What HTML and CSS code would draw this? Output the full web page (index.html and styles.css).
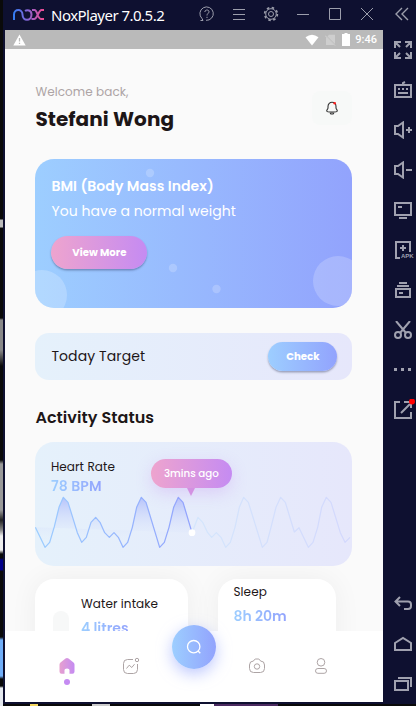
FILE: index.html
```html
<!DOCTYPE html>
<html lang="en">
<head>
<meta charset="utf-8">
<title>NoxPlayer 7.0.5.2</title>
<link rel="stylesheet" href="styles.css">
</head>
<body>
<div class="window">
  <header class="titlebar">
    <svg class="logo" width="32" height="14" viewBox="0 0 32 14" fill="none" stroke="url(#nox)" stroke-width="2">
      <defs><linearGradient id="nox" gradientUnits="userSpaceOnUse" x1="0" y1="0" x2="31" y2="0"><stop offset="0" stop-color="#2f7df5"/><stop offset=".45" stop-color="#8266d8"/><stop offset="1" stop-color="#f04b90"/></linearGradient></defs>
      <path d="M1 12V6.500C1 0.500 9.500 0.500 9.500 6.500C9.500 13.500 18.500 13.500 18.500 6.500C18.500 2 14 1.500 12 3M19 2H21.500C24.500 2 24.500 11 28 11H31M31 2H28.500C25.500 2 24.500 11 21 11H18.500"/>
    </svg>
    <span class="title">NoxPlayer 7.0.5.2</span>
    <div class="controls">
      <svg width="16" height="16" viewBox="0 0 16 16"><path d="M1.500 14.500H4L3 12.500A6.700 6.700 0 1 1 7 14.300M5.800 6C6 3.200 10.300 3.500 10 6C9.800 7.500 8 7.500 8 9.500M8 10.800V12"/></svg>
      <svg width="16" height="16" viewBox="0 0 16 16"><path d="M2 3.500H14M2 8.500H14M2 13.500H14"/></svg>
      <svg width="16" height="16" viewBox="0 0 16 16"><circle cx="8" cy="8" r="5.300"/><circle cx="8" cy="8" r="2.500"/><circle cx="8" cy="8" r="6.400" stroke-width="1.600" stroke-dasharray="2.500 2.520"/></svg>
      <svg width="16" height="16" viewBox="0 0 16 16"><path d="M2 8.500H14"/></svg>
      <svg width="16" height="16" viewBox="0 0 16 16"><path d="M2.500 2.500H13.500V13.500H2.500Z"/></svg>
      <svg width="16" height="16" viewBox="0 0 16 16"><path d="M2 2L14 14M14 2L2 14"/></svg>
      <svg class="collapse" width="16" height="16" viewBox="0 0 16 16"><path d="M8 2L2 8L8 14M14 2L8 8L14 14" stroke-width="1.400"/></svg>
    </div>
  </header>

  <div class="main">
    <section class="app">
      <div class="statusbar">
        <svg width="13" height="12" viewBox="0 0 13 12"><path d="M6.500 0.500L12.700 11.500H0.300Z" fill="#fff"/><path d="M6.500 4V7.500M6.500 8.800V10" stroke="#bababa" stroke-width="1.300"/></svg>
        <div class="signals">
          <svg width="14" height="12" viewBox="0 0 14 12"><path d="M0.500 3.300Q7-2 13.500 3.300L7 11.500Z" fill="#fff"/></svg>
          <svg width="11" height="12" viewBox="0 0 11 12"><path d="M4 0.800H10V11H1V4Z" fill="#cecece"/><path d="M0 1L10.500 11.500" stroke="#bababa" stroke-width="1.500"/><path d="M0 1.500L10 11.500" stroke="#dadada" stroke-width=".8"/></svg>
          <svg width="8" height="13" viewBox="0 0 8 13"><path d="M2.500 0H5.500V1H8V13H0V1H2.500Z" fill="#fff"/></svg>
          <span class="clock">9:46</span>
        </div>
      </div>

      <main class="content">
        <div class="greeting">
          <div>
            <p class="welcome">Welcome back,</p>
            <h1 class="name">Stefani Wong</h1>
          </div>
          <div class="bell">
            <svg width="14" height="16" viewBox="0 0 14 16" fill="none" stroke="#333" stroke-width="1.100"><path d="M3 6.500C3 0.800 11 0.800 11 6.500V8C11 9 12.500 10 12.300 11C12 12.500 2 12.500 1.700 11C1.500 10 3 9 3 8ZM5 13.200Q7 14.800 9 13.200"/><circle cx="9.700" cy="3.200" r="1.300" fill="#f22" stroke="none"/></svg>
          </div>
        </div>

        <section class="bmi">
          <svg class="bubbles" width="317" height="149" viewBox="0 0 317 149" fill="#fff"><circle cx="7" cy="136" r="25" opacity=".22"/><circle cx="303" cy="122" r="25" opacity=".2"/><circle cx="115" cy="14" r="4.200" opacity=".2"/><circle cx="138" cy="109" r="4.200" opacity=".2"/><circle cx="181.500" cy="130" r="4.200" opacity=".2"/></svg>
          <h2 class="bmi-title">BMI (Body Mass Index)</h2>
          <p class="bmi-text">You have a normal weight</p>
          <button class="pill view">View More</button>
        </section>

        <section class="target">
          <span class="target-label">Today Target</span>
          <button class="pill check">Check</button>
        </section>

        <h2 class="section-title">Activity Status</h2>

        <section class="heart">
          <div class="heart-label">Heart Rate</div>
          <div class="heart-value gradient-text">78 BPM</div>
          <svg class="wave" width="317" height="56" viewBox="106 162 951 168" fill="none" stroke-width="3.800" stroke-linejoin="round">
            <defs>
              <linearGradient id="line" gradientUnits="userSpaceOnUse" x1="107" y1="0" x2="577" y2="0"><stop stop-color="#9dceff"/><stop offset="1" stop-color="#92a3fd"/></linearGradient>
              <linearGradient id="rest" gradientUnits="userSpaceOnUse" x1="577" y1="0" x2="1050" y2="0"><stop stop-color="#d4e6fc"/><stop offset="1" stop-color="#d3d8fd"/></linearGradient>
              <linearGradient id="fill" x1="0" y1="0" x2="0" y2="1"><stop stop-color="#a6b4fb" stop-opacity=".75"/><stop offset=".85" stop-color="#dfe8fb" stop-opacity="0"/></linearGradient>
            </defs>
            <path fill="url(#fill)" d="M107 262L136 322L150 307L164 260L178 202L191 172L205 187L219 232L233 278L246 307L260 292L274 247L288 232L301 247L315 278L329 292L343 278L356 292L370 322L384 307L398 262L411 202L425 172L439 187L480 322L494 307L508 262L522 202L536 172L550 187L577 278Z"/>
            <path stroke="url(#rest)" d="M577 278L595 232L609 247L624 278L636 292L650 278L664 292L678 322L692 307L706 262L719 202L732 172L746 187L788 322L802 307L814 262L829 202L843 172L857 187L884 276L898 263L926 322L940 307L954 262L966 202L980 172L994 187L1022 278L1036 307L1051 292"/>
            <path stroke="url(#line)" d="M107 262L136 322L150 307L164 260L178 202L191 172L205 187L219 232L233 278L246 307L260 292L274 247L288 232L301 247L315 278L329 292L343 278L356 292L370 322L384 307L398 262L411 202L425 172L439 187L480 322L494 307L508 262L522 202L536 172L550 187L577 278"/>
            <circle cx="577" cy="278" r="10" fill="#fff"/>
          </svg>
          <div class="tooltip"><span>3mins ago</span></div>
        </section>

        <div class="stats">
          <section class="stat water">
            <div class="water-bar"></div>
            <div>
              <div class="stat-label water-label">Water intake</div>
              <div class="stat-value gradient-text water-value">4 litres</div>
            </div>
          </section>
          <section class="stat sleep">
            <div class="stat-label sleep-label">Sleep</div>
            <div class="stat-value gradient-text sleep-value">8h 20m</div>
          </section>
        </div>
      </main>

      <nav class="tabs">
        <div class="tab active">
          <svg width="16" height="17" viewBox="0 0 16 17"><defs><linearGradient id="home"><stop stop-color="#e6a0cf"/><stop offset="1" stop-color="#c58bf2"/></linearGradient></defs><path fill="url(#home)" d="M6.500 1Q8 0 9.500 1L14.500 5Q15.500 6 15.500 7V14Q15.500 16.200 13.500 16.200H10.500V12.500Q10.500 11 8 11T5.500 12.500V16.200H2.500Q0.500 16.200 0.500 14V7Q0.500 6 1.500 5Z"/></svg>
          <i class="dot"></i>
        </div>
        <div class="tab">
          <svg width="18" height="18" viewBox="0 0 18 18" fill="none" stroke="#ada4a5"><path d="M11 2.500H5.500Q1.500 2.500 1.500 6.500V12.500Q1.500 16.500 5.500 16.500H11.500Q15.500 16.500 15.500 12.500V7M4.500 11.500L7.200 8.200L9.800 10.500L12.500 7.200"/><circle cx="15" cy="3" r="1.700"/></svg>
        </div>
        <div class="search">
          <svg width="16" height="16" viewBox="0 0 16 16" fill="none" stroke="#fff" stroke-width="1.300"><circle cx="7.700" cy="7.700" r="6.200"/><path d="M12 12L14.300 14.300"/></svg>
        </div>
        <div class="tab">
          <svg width="18" height="18" viewBox="0 0 18 18" fill="none" stroke="#ada4a5"><path d="M5.500 4L6.500 2.500Q7 2 8 2H10Q11 2 11.500 2.500L12.500 4Q16.500 4 16.500 8V11.500Q16.500 15.500 12.500 15.500H5.500Q1.500 15.500 1.500 11.500V8Q1.500 4 5.500 4Z"/><circle cx="9" cy="9.500" r="2.700"/></svg>
        </div>
        <div class="tab">
          <svg width="18" height="18" viewBox="0 0 18 18" fill="none" stroke="#ada4a5"><circle cx="9" cy="5.300" r="3.800"/><rect x="3.500" y="11.500" width="11" height="4.800" rx="2.400"/></svg>
        </div>
      </nav>
    </section>

    <aside class="toolbar">
      <div class="tool"><svg width="18" height="18" viewBox="0 0 18 18"><path d="M1 7V1H7M1 1L6 6M11 1H17V7M17 1L12 6M1 11V17H7M1 17L6 12M17 11V17H11M17 17L12 12"/></svg></div>
      <div class="tool"><svg width="18" height="18" viewBox="0 0 18 18"><path d="M1 4H17V16H1ZM9 4V2L11 1M4 8H6M8 8H10M12 8H14M4 12H14"/></svg></div>
      <div class="tool"><svg width="18" height="18" viewBox="0 0 18 18"><path d="M1 5H4L9 1.500V16.500L4 13H1ZM12 9H18M15 6V12"/></svg></div>
      <div class="tool"><svg width="18" height="18" viewBox="0 0 18 18"><path d="M1 5H4L9 1.500V16.500L4 13H1ZM12 9H18"/></svg></div>
      <div class="tool"><svg width="18" height="18" viewBox="0 0 18 18"><path d="M1 2H17V14H1ZM4 6H8M5 17H13"/></svg></div>
      <div class="tool apk"><svg width="18" height="18" viewBox="0 0 18 18"><path d="M6 17H2V1H16V11M9 4V10M6 7H12"/></svg><span class="apk-text">APK</span></div>
      <div class="tool"><svg width="18" height="18" viewBox="0 0 18 18"><path d="M2 8H16V16H2ZM5 12H9M3 5H15M5 2H13"/></svg></div>
      <div class="tool"><svg width="18" height="18" viewBox="0 0 18 18"><path d="M2 0L12 12M16 0L6 12"/><circle cx="4" cy="14" r="3"/><circle cx="14" cy="14" r="3"/></svg></div>
      <div class="tool"><svg width="18" height="18" viewBox="0 0 18 18"><path d="M0 8.500H3M7 8.500H10M14 8.500H17" stroke-width="3"/></svg></div>
      <div class="tool"><svg width="22" height="20" viewBox="0 0 22 20"><path d="M6 3H1V19H17V13M7 14L16 5M10 3H17V9"/><circle cx="18" cy="2.500" r="3" fill="#f00" stroke="none"/></svg></div>
      <div class="spacer"></div>
      <div class="tool"><svg width="18" height="18" viewBox="0 0 18 18"><path d="M6 2L1.500 6.500L6 11M2 6.500H14Q17 6.500 17 9.500V11Q17 14 14 14H10"/></svg></div>
      <div class="tool"><svg width="18" height="18" viewBox="0 0 18 18"><path d="M1 8L9 3L17 8V15H1Z"/></svg></div>
      <div class="tool"><svg width="18" height="18" viewBox="0 0 18 18"><path d="M1 6H14V15H1ZM4 3H17V12"/></svg></div>
    </aside>
  </div>
</div>
</body>
</html>
```

FILE: styles.css
```css
* { box-sizing: border-box; margin: 0; padding: 0; }

body {
  width: 416px;
  height: 706px;
  padding: 0 0 2px 3px;
  overflow: hidden;
  font-family: Poppins, Inter, sans-serif;
  color: #1d1617;
  background:
    linear-gradient(90deg, transparent 30px, #f5d860 30px 38px, transparent 38px 92px, #ccc 92px 110px, transparent 110px 200px, #fff 200px 214px, #4b2a60 214px 278px, transparent 278px) 0 704px / 416px 2px no-repeat,
    linear-gradient(180deg, #0a0a0a 219px, #bbb 220px 227px, #0a0a0a 228px 318px, #888 320px 350px, #0a0a0a 366px 460px, #999 464px 510px, #222 520px, #888 530px, #eee 536px 550px, #0a0a0a 554px 558px, #00008b 560px 570px, #0a0a0a 571px 637px, #70aef8 640px 676px, #0a0a0a 679px 686px, #e4e8ee 688px) 0 0 / 3px 706px no-repeat,
    #0a0a0a;
}
svg { display: block; flex: none; }

.window { height: 704px; display: flex; flex-direction: column; background: #0e1030; }

.titlebar { height: 30px; display: flex; align-items: center; padding-left: 10px; }
.title {
  width: 137px;
  margin-left: 6px;
  color: #fff;
  font: 15px "Noto Sans", sans-serif;
  letter-spacing: -0.52px;
  white-space: nowrap;
}
.controls { display: flex; gap: 16px; margin-left: 11px; margin-top: -2px; }
.controls svg { fill: none; stroke: #9c9eac; stroke-width: 1; }
.controls .collapse { margin-left: 3px; }

.main { flex: 1; min-height: 0; display: flex; padding-left: 2px; }
.app { width: 378px; height: 672px; display: flex; flex-direction: column; background: #fafafa; }

.statusbar { height: 19px; flex: none; display: flex; align-items: center; justify-content: space-between; padding: 0 6px 0 8px; background: #bababa; }
.signals { display: flex; align-items: center; gap: 5px; }
.signals svg + svg { margin-left: 1px; }
.clock { color: #fff; font: 500 11px Roboto, sans-serif; }

.content { flex: 1; min-height: 0; overflow: hidden; padding: 33px 30.600px 0 30.400px; }
.greeting { display: flex; justify-content: space-between; height: 77px; }
.welcome { font-size: 12px; line-height: 20px; color: #ada4a5; letter-spacing: 0.08px; }
.name { font-size: 20px; line-height: 34px; font-weight: 700; letter-spacing: 0.06px; white-space: nowrap; }
.bell { width: 40px; height: 34px; margin-top: 9px; border-radius: 8px; background: #f7f9f8; display: flex; align-items: center; justify-content: center; }

.bmi { position: relative; height: 149px; padding: 17px 16px; border-radius: 19px; overflow: hidden; background: linear-gradient(90deg, #9dceff, #92a3fd); color: #fff; }
.bubbles { position: absolute; left: 0; top: 0; }
.bmi-title { font-size: 14px; line-height: 20px; font-weight: 600; letter-spacing: 0.06px; }
.bmi-text { font-size: 14px; line-height: 20px; margin-top: 5px; letter-spacing: 0.06px; }
.pill { display: block; border: 0; border-radius: 20px; color: #fff; font: 700 10.200px Poppins, Inter, sans-serif; box-shadow: 0 1.500px 2px rgba(40, 50, 90, 0.4); }
.view { position: relative; width: 96px; height: 33px; margin-top: 15px; background: linear-gradient(90deg, #eea4ce, #c58bf2); }

.target { height: 47px; margin-top: 25px; padding: 0 15px 0 16px; display: flex; align-items: center; justify-content: space-between; border-radius: 14px; background: linear-gradient(90deg, #e5f1fb, #e6e7fb); }
.target-label { font-size: 14px; letter-spacing: 0.1px; }
.check { width: 69px; height: 29px; background: linear-gradient(90deg, #9dceff, #92a3fd); }

.section-title { font-size: 16px; line-height: 24px; font-weight: 600; letter-spacing: 0.06px; margin: 26px 0 12px; }

.heart { position: relative; height: 124px; padding-top: 16px; border-radius: 19px; background: linear-gradient(90deg, #e5f1fb, #e6e7fb); }
.heart-label { margin-left: 15.500px; font-size: 12px; line-height: 18px; letter-spacing: 0.1px; }
.heart-value { margin-left: 15.500px; width: max-content; font-size: 14px; line-height: 20px; font-weight: 600; letter-spacing: 0.1px; }
.wave { margin-top: -2px; }
.gradient-text { color: transparent; background: linear-gradient(90deg, #9dceff, #92a3fd); background-clip: text; -webkit-background-clip: text; }
.tooltip { position: absolute; left: 115.500px; top: 17px; width: 81px; height: 29px; border-radius: 15px; color: #fff; font-size: 10.300px; font-weight: 500; line-height: 29px; text-align: center; background: linear-gradient(90deg, #eea4ce, #c58bf2); box-shadow: 0 5px 16px rgba(197, 139, 242, 0.3); }
.tooltip::after { content: ""; position: absolute; left: 36px; top: 29px; border: solid transparent; border-width: 8px 4.500px 0; border-top-color: #d391e2; }

.stats { display: flex; gap: 29.500px; margin-top: 13px; }
.stat { height: 150px; background: #fff; border-radius: 19px; box-shadow: 0 0 28px rgba(0, 0, 0, 0.055); }
.water { width: 153px; padding: 15px 17px; display: flex; }
.water-bar { width: 16px; height: 110px; margin: 17px 12px 0 0.500px; border-radius: 8px; background: #f7f8f8; }
.sleep { width: 118px; padding: 3px 15.500px; }
.stat-label { font-size: 12px; line-height: 20px; letter-spacing: 0.1px; white-space: nowrap; }
.stat-value { width: max-content; font-size: 14px; line-height: 20px; font-weight: 600; }
.water-value { margin-top: 4px; }
.sleep-value { margin-top: 4px; }

.tabs { position: relative; z-index: 1; height: 71px; flex: none; background: #fff; display: flex; align-items: flex-start; justify-content: center; }
.tab { width: 64px; padding-top: 26px; display: flex; flex-direction: column; align-items: center; }
.tab svg { height: 18px; }
.dot { width: 6px; height: 6px; margin-top: 4px; border-radius: 50%; background: #c58bf2; }
.search { width: 44px; height: 44px; margin: -6px 9px 0 9px; border-radius: 50%; display: flex; align-items: center; justify-content: center; background: linear-gradient(90deg, #9dceff, #92a3fd); box-shadow: 0 5px 15px rgba(146, 163, 253, 0.6); }

.toolbar { width: 33px; height: 674px; display: flex; flex-direction: column; }
.tool { height: 40px; flex: none; padding: 11px 0 0 11px; position: relative; }
.tool svg { fill: none; stroke: #a0a1af; stroke-width: 2; }
.tool:nth-child(10) { padding-top: 9px; }
.apk-text { position: absolute; left: 18px; top: 23px; color: #a0a1af; background: #0e1030; font: 700 6px/7px "Liberation Sans", sans-serif; }
.spacer { height: 154px; flex: none; }
```
